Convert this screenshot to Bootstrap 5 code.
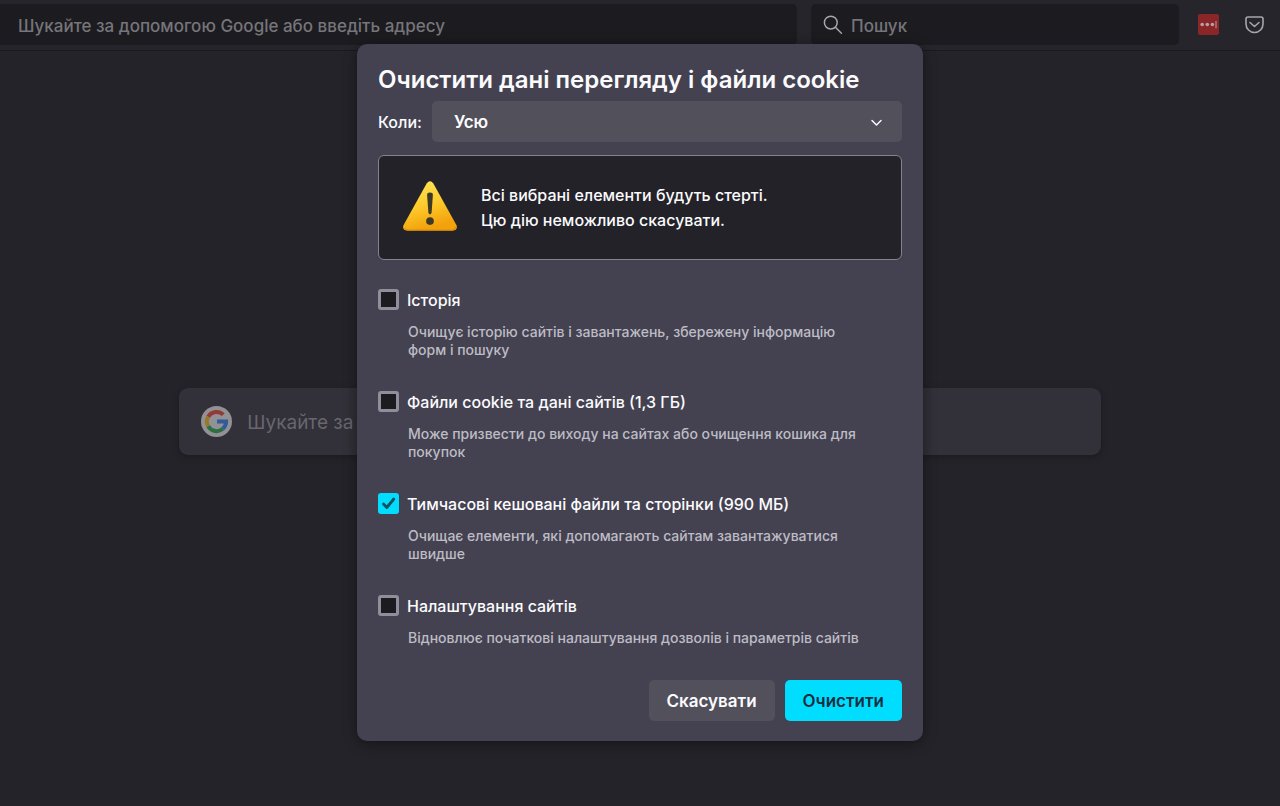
<!DOCTYPE html>
<html lang="uk">
<head>
<meta charset="utf-8">
<meta name="viewport" content="width=device-width, initial-scale=1">
<title>Очистити дані перегляду і файли cookie</title>
<link rel="stylesheet" href="https://cdn.jsdelivr.net/npm/bootstrap@5.3.0/dist/css/bootstrap.min.css">
<style>
  body { background: #242329; color: #fbfbfe; font-family: Inter, "Noto Sans", sans-serif; font-size: 16px; font-weight: 500; line-height: 24px; }
  .toolbar { height: 51px; padding: 4px 16px 5px 0; background: #26252b; border-bottom: 1px solid #1b1a1f; }
  .field-box { height: 41px; background: #1c1b20; border-radius: 5px; }
  .field-box input, .home-search input { background: transparent; border: 0; outline: 0; min-width: 0; color: #cfcfd4; padding: 2px 0 0; }
  .field-box input { font-size: 17px; font-weight: 500; height: 41px; }
  .field-box input::placeholder { color: #76757a; opacity: 1; }
  .url-box { flex: 779 1 0; padding-left: 18px; border-radius: 0 5px 5px 0; }
  .find-box { flex: 356 1 0; margin-left: 14px; padding-left: 12px; gap: 8px; }
  .tool-group { gap: 26px; margin-left: 19px; }
  .tool-btn { background: none; border: 0; padding: 0; line-height: 0; }
  .home { padding-top: 337px; }
  .home-search { width: 72%; height: 67px; padding-left: 22px; gap: 15px; background: #323038; border-radius: 9px; box-shadow: 0 2px 6px #1c1b20; }
  .home-search input { font-size: 19px; }
  .home-search input::placeholder { color: #68666e; opacity: 1; }
  .overlay { position: absolute; inset: 0; padding-top: 44px; }
  .clear-dialog { width: 566px; max-width: 100%; padding: 20px 21px; background: #444250; border-radius: 10px; box-shadow: 0 2px 14px rgba(0, 0, 0, .45); }
  .clear-dialog h1 { font-size: 24px; line-height: 32px; font-weight: 600; margin: 0 0 5px; }
  .period-row { gap: 10px; }
  .period { height: 41px; padding: 0 52px 0 22px; appearance: none; border: 0; border-radius: 5px; background: #52505b; color: #fbfbfe; font-size: 17px; font-weight: 600; width: 100%; }
  .period-chevron { position: absolute; right: 19px; top: 15px; pointer-events: none; }
  .notice { margin: 13px 0 29px; padding: 0 24px; height: 105px; gap: 24px; background: #232228; border: 1px solid #85848d; border-radius: 6px; line-height: 25px; }
  .options { gap: 32px; margin-bottom: 33px; }
  .option { display: grid; grid-template-columns: 21px 1fr; column-gap: 8px; row-gap: 12px; }
  .option label { line-height: 22px; }
  .option p { grid-column: 2; font-size: 14px; line-height: 18px; color: #bdbcc5; margin: 0; padding: 0 28px 0 1px; }
  .option .form-check-input { width: 21px; height: 21px; margin: 0; border: 3px solid #8f8e9b; border-radius: 3px; background-color: #1c1b20; }
  .option .form-check-input:checked { border: 0; background-color: #00ddff; background-size: 21px 21px; background-image: url("data:image/svg+xml,%3Csvg xmlns='http://www.w3.org/2000/svg' viewBox='0 0 21 21'%3E%3Cpath d='M5.5 11l3.3 3.5 7-8.5' fill='none' stroke='%2315505f' stroke-width='2.8' stroke-linecap='round' stroke-linejoin='round'/%3E%3C/svg%3E"); }
  .dlg-actions { gap: 10px; }
  .dlg-btn { height: 41px; padding: 2px 18px 0; font-size: 17px; font-weight: 600; border: 0; border-radius: 5px; }
  .btn-cancel, .btn-cancel:hover { background: #52505b; color: #fbfbfe; }
  .btn-clear, .btn-clear:hover { background: #00ddff; color: #17303f; }
</style>
</head>
<body class="min-vh-100 position-relative">
<header class="toolbar d-flex align-items-center">
  <div class="field-box url-box d-flex align-items-center">
    <input type="text" class="flex-grow-1" aria-label="Адреса" placeholder="Шукайте за допомогою Google або введіть адресу">
  </div>
  <div class="field-box find-box d-flex align-items-center">
    <svg width="20" height="20" viewBox="0 0 20 20" fill="none" stroke="#a7a6ab" stroke-width="1.5" stroke-linecap="round" aria-hidden="true"><circle cx="7.8" cy="7.6" r="6.4"/><path d="M12.4 12.2l6 6"/></svg>
    <input type="search" class="flex-grow-1" aria-label="Пошук" placeholder="Пошук">
  </div>
  <div class="tool-group d-flex align-items-center">
    <button type="button" class="tool-btn" aria-label="Менеджер паролів"><svg width="21" height="21" viewBox="0 0 21 21"><rect width="21" height="21" rx="2" fill="#8a2528"/><g fill="#b9a0a4"><circle cx="4.2" cy="10.5" r="1.8"/><circle cx="9.3" cy="10.5" r="1.8"/><circle cx="14.4" cy="10.5" r="1.8"/><path d="M17.5 7h1v7.300h-1z"/></g></svg></button>
    <button type="button" class="tool-btn" aria-label="Pocket"><svg width="19" height="19" viewBox="0 0 19 19" fill="none" stroke="#a7a6ab" stroke-width="1.6" stroke-linecap="round" stroke-linejoin="round"><path d="M3 2h13a2 2 0 0 1 2 2v5a8.500 8.500 0 0 1-17 0V4a2 2 0 0 1 2-2z"/><path d="M5 7.500l4.500 4 4.500-4"/></svg></button>
  </div>
</header>

<main class="home">
  <div class="home-search d-flex align-items-center mx-auto">
    <svg width="31" height="31" viewBox="0 0 31 31" aria-hidden="true"><circle cx="15.500" cy="15.500" r="15.500" fill="#929196"/><g fill="none" stroke-width="4"><path d="M7.200 10.700A9.600 9.600 0 0 1 22.300 8.700" stroke="#933a36"/><path d="M7.200 20.300a9.600 9.600 0 0 1 0-9.600" stroke="#987926"/><path d="M21.800 22.800A9.600 9.600 0 0 1 7.200 20.300" stroke="#2b6f42"/><path d="M16 15.500h9.100a9.600 9.600 0 0 1-3.300 7.300" stroke="#335a99"/></g></svg>
    <input type="search" class="flex-grow-1" aria-label="Пошук в інтернеті" placeholder="Шукайте за допомогою Google або введіть адресу">
  </div>
</main>

<div class="overlay d-flex justify-content-center align-items-start">
  <form class="clear-dialog" role="dialog" aria-labelledby="dlg-title">
    <h1 id="dlg-title">Очистити дані перегляду і файли cookie</h1>
    <div class="period-row d-flex align-items-center">
      <label for="period">Коли:</label>
      <div class="position-relative flex-grow-1">
        <select id="period" class="period"><option>Усю</option></select>
        <svg class="period-chevron" width="13" height="13" viewBox="0 0 13 13" fill="none" stroke="#fbfbfe" stroke-width="1.500" stroke-linecap="round" stroke-linejoin="round" aria-hidden="true"><path d="M2 4.500l4.500 4.500 4.500-4.500"/></svg>
      </div>
    </div>
    <div class="notice d-flex align-items-center">
      <svg class="flex-shrink-0" width="54" height="54" viewBox="0 0 56 56" aria-hidden="true">
        <defs><linearGradient id="warn" x1="0" y1="0" x2="0.300" y2="1"><stop offset="0" stop-color="#ffe95c"/><stop offset=".55" stop-color="#fdca2c"/><stop offset="1" stop-color="#f3a20c"/></linearGradient></defs>
        <path d="M24.500 2.500Q28-2 31.500 2.500L55.500 46Q57 51 51.500 51.500H4.500Q-1 51 .5 46Z" fill="url(#warn)"/>
        <path d="M2 49q1 2 3 2h46q3 0 3.500-3" fill="none" stroke="#c98109" stroke-width="1"/>
        <path d="M25 14.500q0-2.500 3-2.500t3 2.500l-1.300 18q-.2 2.200-1.700 2.200t-1.700-2.200z" fill="#3c3a27"/><circle cx="28" cy="41.500" r="4" fill="#3c3a27"/>
      </svg>
      <div>Всі вибрані елементи будуть стерті.<br>Цю дію неможливо скасувати.</div>
    </div>
    <div class="options d-flex flex-column">
      <div class="option">
        <input class="form-check-input" type="checkbox" id="history">
        <label for="history">Історія</label>
        <p>Очищує історію сайтів і завантажень, збережену інформацію форм і пошуку</p>
      </div>
      <div class="option">
        <input class="form-check-input" type="checkbox" id="cookies">
        <label for="cookies">Файли cookie та дані сайтів (1,3 ГБ)</label>
        <p>Може призвести до виходу на сайтах або очищення кошика для покупок</p>
      </div>
      <div class="option">
        <input class="form-check-input" type="checkbox" id="cache" checked>
        <label for="cache">Тимчасові кешовані файли та сторінки (990 МБ)</label>
        <p>Очищає елементи, які допомагають сайтам завантажуватися швидше</p>
      </div>
      <div class="option">
        <input class="form-check-input" type="checkbox" id="settings">
        <label for="settings">Налаштування сайтів</label>
        <p>Відновлює початкові налаштування дозволів і параметрів сайтів</p>
      </div>
    </div>
    <div class="dlg-actions d-flex justify-content-end">
      <button type="button" class="btn dlg-btn btn-cancel">Скасувати</button>
      <button type="button" class="btn dlg-btn btn-clear">Очистити</button>
    </div>
  </form>
</div>
<script src="https://cdn.jsdelivr.net/npm/bootstrap@5.3.0/dist/js/bootstrap.bundle.min.js"></script>
</body>
</html>
